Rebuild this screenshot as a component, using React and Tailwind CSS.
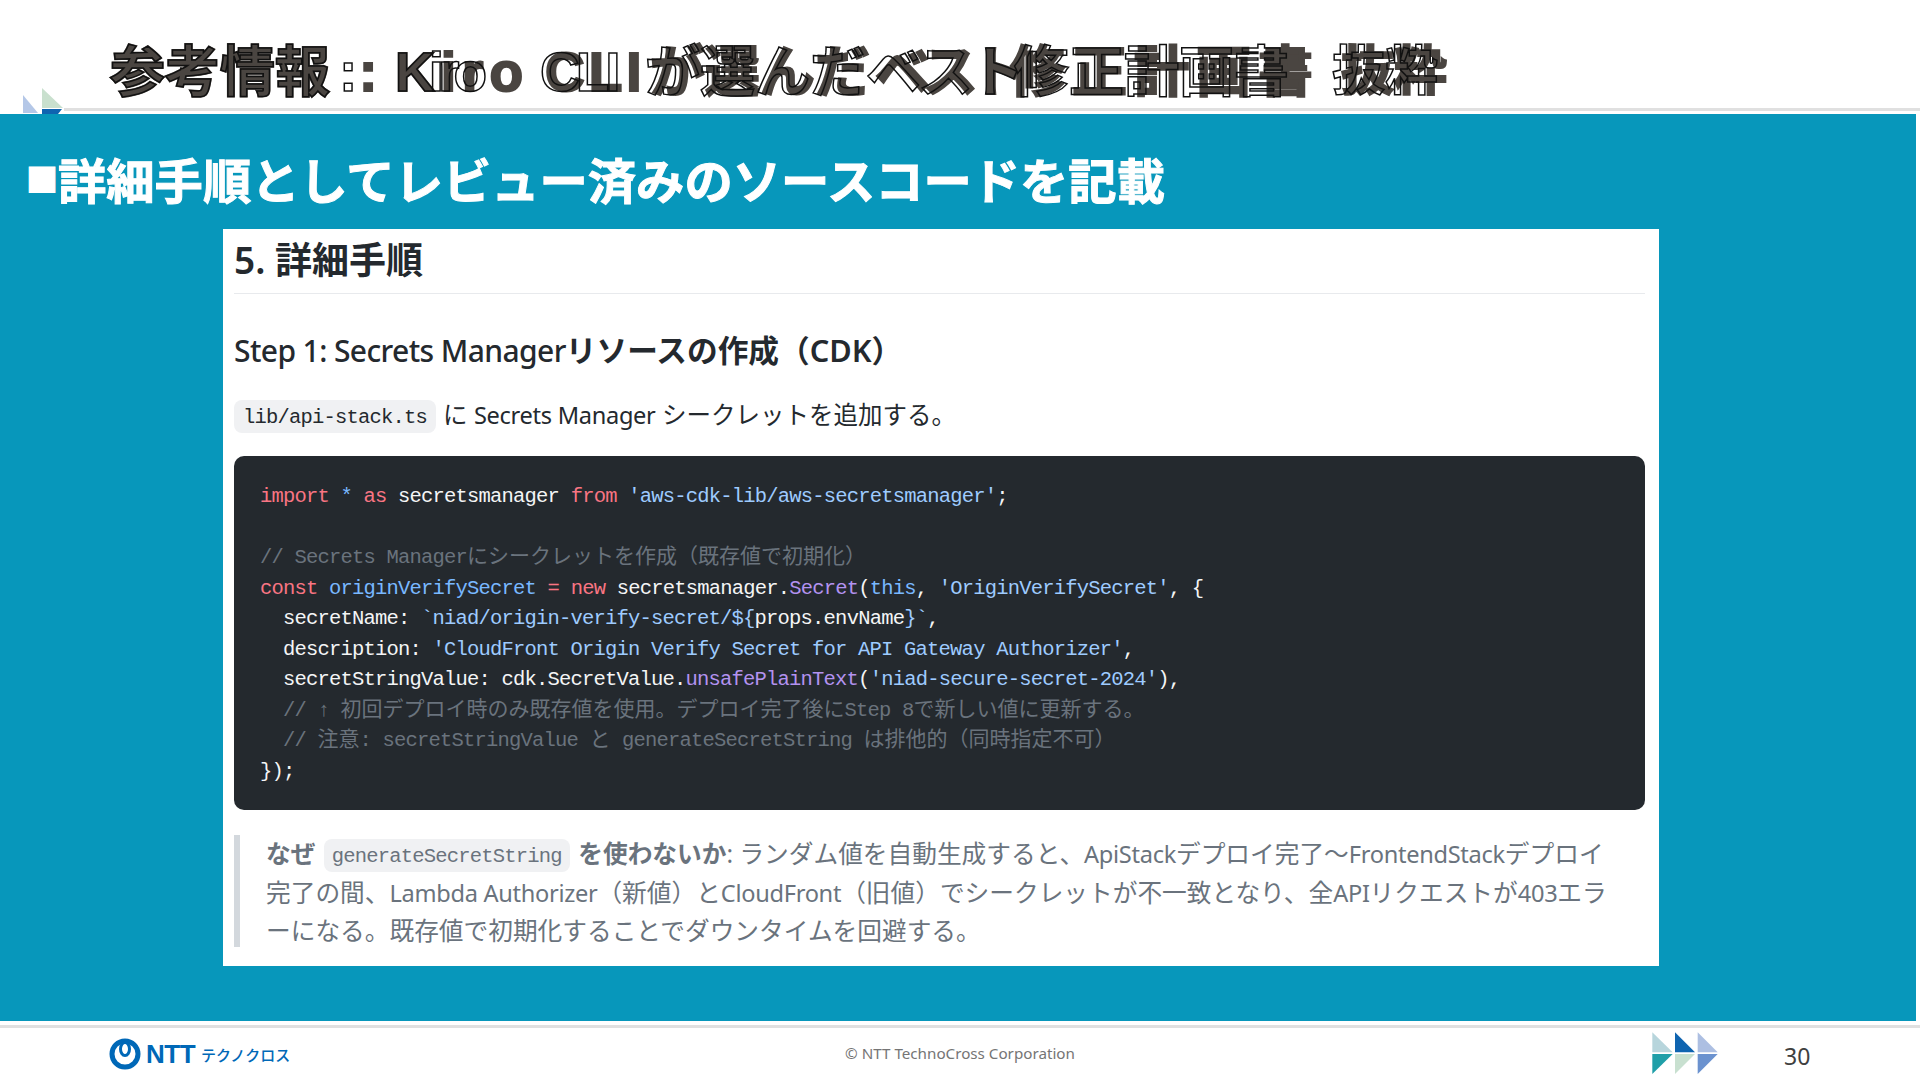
const jp = "font-['Noto_Sans','Noto_Sans_CJK_JP',sans-serif]";
const mono = "font-['Liberation_Mono','Noto_Sans_CJK_JP',monospace]";

// japanese inside the code font is a bit wider than the latin cell
function J({ children }) {
  return <span className="text-[21px] tracking-normal font-['Noto_Sans_CJK_JP',sans-serif] leading-none">{children}</span>;
}
// latin runs in the prose are tighter than the japanese around them
function L({ children }) {
  return <span className="text-[23.6px] tracking-[-0.3px]">{children}</span>;
}
const K = ({ children }) => <span className="text-[#f97583]">{children}</span>;
const S = ({ children }) => <span className="text-[#9ecbff]">{children}</span>;
const B = ({ children }) => <span className="text-[#79b8ff]">{children}</span>;
const F = ({ children }) => <span className="text-[#b392f0]">{children}</span>;
const C = ({ children }) => <span className="text-[#6a737d]">{children}</span>;

function Line({ children }) {
  return <div className="h-[30.5px] leading-[30.5px] whitespace-pre">{children}</div>;
}

// the slide title has two misaligned layers, one filled grey and one outlined
function TitleLayer({ className, segs }) {
  return (
    <div className={"absolute left-[110px] top-[32px] flex whitespace-pre text-[55px] leading-[80px] font-bold font-['Liberation_Sans','Noto_Sans_CJK_JP',sans-serif] " + className}>
      {segs}
    </div>
  );
}

function TopMark() {
  return (
    <svg className="absolute left-[20px] top-[86px]" width="48" height="28" viewBox="0 0 48 28">
      <polygon points="3,9 18,27 3,27" fill="#b4c7e7" />
      <polygon points="22,2 43,22 22,22" fill="#c9e0ce" />
      <polygon points="22,23 42,23 38,28 22,28" fill="#0f64b0" />
    </svg>
  );
}

function Arrows() {
  return (
    <svg width="72" height="46" viewBox="0 0 72 46">
      <polygon points="2.3,1.3 22.7,21.3 2.3,21.3" fill="#b7d5dc" />
      <polygon points="2.3,23 22.7,23 2.3,43" fill="#1f9fa8" />
      <polygon points="25,1.3 45,21.3 25,21.3" fill="#0f64b0" />
      <polygon points="25,23 45,23 25,43" fill="#c8e0d0" />
      <polygon points="47.7,1.3 67.7,21.3 47.7,21.3" fill="#adbfe2" />
      <polygon points="47.7,23 67.7,23 47.7,43" fill="#6b92cf" />
    </svg>
  );
}

function Logo() {
  return (
    <div className="flex flex-none items-center w-[190px] whitespace-nowrap text-[#0068b7]">
      <svg className="flex-none" width="32" height="32" viewBox="0 0 32 32" fill="none" stroke="#0068b7">
        <circle cx="16" cy="16" r="13" strokeWidth="5" />
        <ellipse cx="16" cy="11" rx="4.5" ry="6.5" strokeWidth="3" />
      </svg>
      <span className="ml-[5px] text-[26px] leading-none font-bold font-['Liberation_Sans',sans-serif] tracking-[-0.5px]">NTT</span>
      <span className="ml-[6px] text-[15px] leading-none font-medium font-['Noto_Sans_CJK_JP',sans-serif]">テクノクロス</span>
    </div>
  );
}

export default function App() {
  const greySegs = (
    <>
      <span className="w-[249px]">参考情報</span>
      <span className="w-[36px]">:</span>
      <span className="w-[150px] tracking-[6px]">Kiro</span>
      <span className="w-[105px] tracking-[4px]">CLI</span>
      <span className="w-[225px]">が選んだ</span>
      <span className="w-[135px] tracking-[-8px]">ベスト</span>
      <span className="w-[331px] tracking-[7px]">修正計画書</span>
      <span className="text-[53px]">抜粋</span>
    </>
  );
  const lineSegs = (
    <>
      <span className="w-[229px]">参考情報</span>
      <span className="w-[56px]">:</span>
      <span className="w-[145px] tracking-[-6px]">Kiro</span>
      <span className="w-[105px] tracking-[-4px]">CLI</span>
      <span className="w-[221px]">が選んだ</span>
      <span className="w-[148px] tracking-[-4px]">ベスト</span>
      <span className="w-[318px]">修正計画書</span>
      <span className="text-[53px]">抜粋</span>
    </>
  );

  return (
    <div className={"relative w-[1920px] h-[1080px] overflow-hidden bg-white flex flex-col " + jp}>
      <header className="relative h-[114px] flex flex-col justify-end pb-[3px]">
        <div className="ml-[64px] h-[3px] bg-[#e0e0e0]" />
        <TopMark />
        <TitleLayer className="text-[#4a4541] [-webkit-text-stroke:2px_#4a4541]" segs={greySegs} />
        <TitleLayer className="text-transparent [-webkit-text-stroke:1.5px_#111111]" segs={lineSegs} />
      </header>

      <main className="w-[1916px] h-[907px] bg-[#0797bb]">
        <h1 className="h-[115px] pl-[26px] pt-[12px] flex items-center text-[48.3px] leading-[80px] font-bold text-white whitespace-nowrap font-['Noto_Sans_CJK_JP',sans-serif] [-webkit-text-stroke:1px_white]">
          <span className="w-[32px] text-[32px]">■</span>
          <span>詳細手順としてレビュー済みのソースコードを記載</span>
        </h1>

        <section className="ml-[223px] w-[1436px] h-[737px] bg-white pl-[11px] pr-[14px] text-[#24292e]">
          <h2 className="h-[65px] leading-[62px] text-[37px] font-semibold border-b border-[#e8eaed]">5. 詳細手順</h2>
          <h3 className="mt-[36px] leading-[40px] text-[30px] font-medium whitespace-nowrap">
            <span className="tracking-[-0.6px]">Step 1: Secrets Manager</span>
            <span className="text-[30.7px] font-semibold">リソースの作成（CDK）</span>
          </h3>
          <p className="mt-[27px] h-[34px] leading-[34px] text-[24.5px] whitespace-nowrap">
            <code className={"inline-block h-[33px] leading-[36px] px-[9px] mt-[2px] rounded-lg bg-[#f0f1f3] text-[20.5px] tracking-[-0.8px] align-top " + mono}>lib/api-stack.ts</code>
            <span className="ml-[7px]">に <L>Secrets Manager</L> シークレットを追加する。</span>
          </p>

          <pre className={"mt-[24px] h-[354px] rounded-[10px] bg-[#24292e] pl-[26px] pt-[26px] text-[20.5px] tracking-[-0.8px] text-[#f4f5f6] " + mono}>
            <Line><K>import</K> <B>*</B> <K>as</K> secretsmanager <K>from</K> <S>'aws-cdk-lib/aws-secretsmanager'</S>;</Line>
            <Line> </Line>
            <Line><C>// Secrets Manager<J>にシークレットを作成（既存値で初期化）</J></C></Line>
            <Line><K>const</K> <B>originVerifySecret</B> <K>=</K> <K>new</K> secretsmanager.<F>Secret</F>(<B>this</B>, <S>'OriginVerifySecret'</S>, {"{"}</Line>
            <Line>  secretName: <S>`niad/origin-verify-secret/${"{"}</S>props.envName<S>{"}"}`</S>,</Line>
            <Line>  description: <S>'CloudFront Origin Verify Secret for API Gateway Authorizer'</S>,</Line>
            <Line>  secretStringValue: cdk.SecretValue.<F>unsafePlainText</F>(<S>'niad-secure-secret-2024'</S>),</Line>
            <Line><C>  // ↑ <J>初回デプロイ時のみ既存値を使用。デプロイ完了後に</J>Step 8<J>で新しい値に更新する。</J></C></Line>
            <Line><C>  // <J>注意</J>: secretStringValue <J>と</J> generateSecretString <J>は排他的（同時指定不可）</J></C></Line>
            <Line>{"});"}</Line>
          </pre>

          <blockquote className="mt-[25px] h-[112px] border-l-[6px] border-[#d3d8dd] pl-[26px] text-[24.7px] leading-[37.5px] text-[#6a737d] whitespace-nowrap">
            <div>
              <strong className="font-bold">なぜ <code className={"inline-block h-[33px] leading-[36px] px-[8px] mx-[2px] rounded-lg bg-[#f0f1f3] text-[20.5px] tracking-[-0.8px] font-normal align-top mt-[4px] " + mono}>generateSecretString</code> を使わないか</strong>: ランダム値を自動生成すると、<L>ApiStack</L>デプロイ完了〜<L>FrontendStack</L>デプロイ
            </div>
            <div>完了の間、<L>Lambda Authorizer</L>（新値）と<L>CloudFront</L>（旧値）でシークレットが不一致となり、全<L>API</L>リクエストが<L>403</L>エラ</div>
            <div>ーになる。既存値で初期化することでダウンタイムを回避する。</div>
          </blockquote>
        </section>
      </main>

      <footer className="flex-1 flex flex-col pt-[4px]">
        <div className="h-[3px] bg-[#e0e0e0]" />
        <div className="flex-1 flex items-center pl-[109px]">
          <Logo />
          <div className="ml-[546px] mb-[2px] w-[230px] text-center text-[15.2px] text-[#757575] whitespace-nowrap">© NTT TechnoCross Corporation</div>
          <div className="ml-[575px]"><Arrows /></div>
          <div className="ml-[62px] mt-[4px] text-[23px] text-[#404040]">30</div>
        </div>
      </footer>
    </div>
  );
}
